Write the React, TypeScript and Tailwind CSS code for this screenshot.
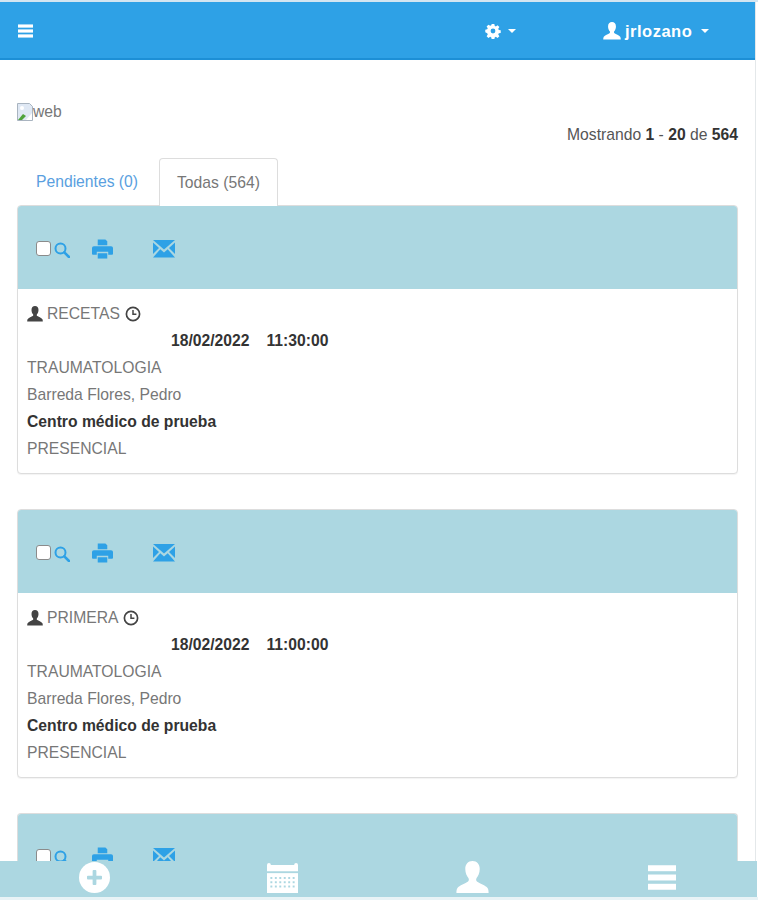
const font = "font-['Liberation_Sans',Arial,sans-serif]";

function Bars({ className }: { className?: string }) {
  return (
    <svg viewBox="0 0 16 16" className={className} fill="currentColor">
      <rect x="0" y="1" width="16" height="3.4" />
      <rect x="0" y="6.3" width="16" height="3.4" />
      <rect x="0" y="11.6" width="16" height="3.4" />
    </svg>
  );
}

function Gear({ className }: { className?: string }) {
  return (
    <svg viewBox="-1 -1 18 18" className={className} fill="currentColor">
      <path
        fillRule="evenodd"
        d="M6.500 0h3l.4 2.200 1.300.6 1.900-1.300 2.100 2.100-1.300 1.900.6 1.300 2.200.4v3l-2.200.4-.6 1.300 1.300 1.900-2.100 2.100-1.900-1.300-1.300.6-.4 2.200h-3l-.4-2.200-1.300-.6-1.900 1.300-2.100-2.100 1.300-1.900-.6-1.300L-.7 9.500v-3l2.200-.4.6-1.300L.8 3l2.100-2.100 1.900 1.300 1.300-.6zM8 5.300a2.700 2.700 0 1 0 0 5.400 2.700 2.700 0 0 0 0-5.400z"
      />
    </svg>
  );
}

function Person({ className }: { className?: string }) {
  return (
    <svg viewBox="0 0 16 16" className={className} fill="currentColor">
      <path d="M8 0c2.200 0 3.500 1.600 3.500 3.900 0 1.800-.7 3.400-1.500 4.300-.4.500-.3 1.500.3 1.900.9.6 4.200 1.900 5 3 .4.600.5 1.500.5 2.400H.2c0-.9.100-1.800.5-2.400.8-1.100 4.100-2.400 5-3 .6-.4.700-1.400.3-1.900C5.200 7.300 4.500 5.700 4.500 3.900 4.500 1.600 5.800 0 8 0z" />
    </svg>
  );
}

function Caret({ className }: { className?: string }) {
  return <span className={`${className} inline-block h-0 w-0 border-x-[4px] border-t-[4px] border-x-transparent border-t-white`} />;
}

function Search({ className }: { className?: string }) {
  return (
    <svg viewBox="0 0 16 16" className={className} fill="none" stroke="currentColor">
      <circle cx="6.500" cy="6.500" r="5" strokeWidth="2" />
      <path d="M10.300 10.300L15 15" strokeWidth="2.600" strokeLinecap="round" />
    </svg>
  );
}

function Printer({ className }: { className?: string }) {
  return (
    <svg viewBox="0 0 22 20" className={className} fill="currentColor">
      <path d="M6 0h8l2 2v4H6z" />
      <path d="M2 7h18a2 2 0 0 1 2 2v6a1 1 0 0 1-1 1h-4v-3H5v3H1a1 1 0 0 1-1-1V9a2 2 0 0 1 2-2z" />
      <path d="M6 14.500h10V20H6z" />
    </svg>
  );
}

function Mail({ className }: { className?: string }) {
  return (
    <svg viewBox="0 0 22 18" className={className} fill="currentColor">
      <path d="M0 0h22L11 9.500z" />
      <path d="M0 2.500L6 8 0 14z" />
      <path d="M22 2.500L16 8l6 6z" />
      <path d="M0 17.500L7.300 9.200 11 12.400l3.700-3.200L22 17.500z" />
    </svg>
  );
}

function Clock({ className }: { className?: string }) {
  return (
    <svg viewBox="0 0 16 16" className={className} fill="none" stroke="currentColor">
      <circle cx="8" cy="8" r="6.600" strokeWidth="1.700" />
      <path d="M8 4v4.300h3.400" strokeWidth="1.500" />
    </svg>
  );
}

function BrokenImage() {
  return (
    <svg viewBox="0 0 16 18" className="h-[18px] w-[16px]">
      <path d="M0.500 0.500h12l3 3v14H0.500z" fill="#dfe8f4" stroke="#a9b4c0" />
      <path d="M1 17l5-6 3 2-4 4z" fill="#4fa33c" />
      <path d="M9 17l6-7v7z" fill="#ffffff" />
      <circle cx="5" cy="5" r="2" fill="#ffffff" />
    </svg>
  );
}

function CalendarIcon({ className }: { className?: string }) {
  const dots = [];
  for (let r = 0; r < 3; r++) {
    for (let c = 0; c < 6; c++) {
      dots.push(<rect key={`${r}-${c}`} x={3.5 + c * 4.6} y={15.5 + r * 4.4} width="2" height="2" fill="#acd7e1" />);
    }
  }
  return (
    <svg viewBox="0 0 32 32" className={className} fill="currentColor">
      <path d="M0 3a2 2 0 0 1 4 0h24a2 2 0 0 1 4 0v6.500H0z" />
      <rect x="0" y="11.500" width="32" height="20.500" />
      {dots}
    </svg>
  );
}

function PanelIcons() {
  return (
    <div className="flex h-[83px] items-center bg-[#acd7e1] pl-[18px] pt-[2px] text-[#2ea1e6]">
      <span className="h-[15px] w-[15px] rounded-[3px] border border-[#8b8b8b] bg-white" />
      <Search className="ml-[3px] mt-[2px] h-[16px] w-[16px]" />
      <Printer className="ml-[22px] h-[20px] w-[21px]" />
      <Mail className="ml-[40px] h-[18px] w-[22px]" />
    </div>
  );
}

function Panel({ tipo, hora }: { tipo: string; hora: string }) {
  return (
    <div className="mb-[35px] overflow-hidden rounded-[4px] border border-[#ddd] bg-white shadow-[0_1px_1px_rgba(0,0,0,0.05)]">
      <PanelIcons />
      <div className="h-[184px] px-[9px] pt-[15px] text-[#777]">
        <div className="flex h-[20px] items-center">
          <Person className="h-[16px] w-[16px] text-[#444]" />
          <span className="ml-[4px]">{tipo}</span>
          <Clock className="ml-[5px] h-[16px] w-[16px] text-[#444]" />
        </div>
        <div className="flex h-[27px] items-center pl-[144px] pt-[7px] font-bold text-[#333]">
          <span>18/02/2022</span>
          <span className="ml-[17px]">{hora}</span>
        </div>
        <div className="flex h-[27px] items-end">TRAUMATOLOGIA</div>
        <div className="flex h-[27px] items-end">Barreda Flores, Pedro</div>
        <div className="flex h-[27px] items-end font-bold text-[#333]">Centro médico de prueba</div>
        <div className="flex h-[27px] items-end">PRESENCIAL</div>
      </div>
    </div>
  );
}

export default function App() {
  return (
    <div className={`${font} relative h-[900px] w-[758px] overflow-hidden bg-white text-[15.7px] leading-[20px]`}>
      <div className="h-[2px] bg-[#d3e5f1]" />
      <div className="mr-[2px] border-r border-r-[#e4e8ea]">
        <header className="flex h-[58px] items-center border-b-2 border-[#1c8fd6] bg-[#2ea1e6] pt-[1px] text-white">
          <Bars className="ml-[18px] h-[16px] w-[15px]" />
          <div className="ml-[452px] flex items-center">
            <Gear className="h-[16px] w-[16px]" />
            <Caret className="ml-[7px]" />
          </div>
          <div className="ml-[87px] flex items-center">
            <Person className="h-[18px] w-[18px]" />
            <span className="ml-[4px] text-[16.5px] font-bold tracking-[0.5px]">jrlozano</span>
            <Caret className="ml-[9px]" />
          </div>
        </header>
        <main className="px-[17px]">
          <div className="flex h-[62px] items-end">
            <div className="flex items-center text-[#777]">
              <BrokenImage />
              <span>web</span>
            </div>
          </div>
          <div className="mt-[3px] text-right text-[#555]">
            Mostrando <b className="text-[#333]">1</b> - <b className="text-[#333]">20</b> de <b className="text-[#333]">564</b>
          </div>
          <div className="mt-[13px] flex h-[47px]">
            <div className="flex h-[47px] items-center pl-[19px] pr-[21px] text-[#5a9fe0]">Pendientes (0)</div>
            <div className="relative z-10 flex h-[48px] items-center rounded-t-[4px] border border-b-0 border-[#ddd] bg-white px-[17px] text-[#777]">
              Todas (564)
            </div>
          </div>
          <Panel tipo="RECETAS" hora="11:30:00" />
          <Panel tipo="PRIMERA" hora="11:00:00" />
          <div className="overflow-hidden rounded-t-[4px] border border-b-0 border-[#ddd]">
            <PanelIcons />
          </div>
        </main>
      </div>
      <footer className="absolute bottom-[3px] left-0 right-[1px] grid h-[36px] grid-cols-4 bg-[#acd7e1] text-white">
        <div className="relative">
          <span className="absolute left-[79px] top-[1px] flex h-[31px] w-[31px] items-center justify-center rounded-full bg-white text-[#acd7e1]">
            <svg viewBox="0 0 16 16" className="h-[15px] w-[15px]" fill="currentColor">
              <path d="M6 1a1 1 0 0 1 1-1h2a1 1 0 0 1 1 1v5h5a1 1 0 0 1 1 1v2a1 1 0 0 1-1 1h-5v5a1 1 0 0 1-1 1H7a1 1 0 0 1-1-1v-5H1a1 1 0 0 1-1-1V7a1 1 0 0 1 1-1h5z" />
            </svg>
          </span>
        </div>
        <div className="relative">
          <CalendarIcon className="absolute left-[78px] top-0 h-[33px] w-[31px]" />
        </div>
        <div className="relative">
          <Person className="absolute left-[77px] top-0 h-[33px] w-[33px]" />
        </div>
        <div className="relative">
          <Bars className="absolute left-[80px] top-[1px] h-[31px] w-[28px]" />
        </div>
      </footer>
      <div className="absolute bottom-0 left-0 right-0 h-[3px] bg-[#e8f3f6]" />
    </div>
  );
}
